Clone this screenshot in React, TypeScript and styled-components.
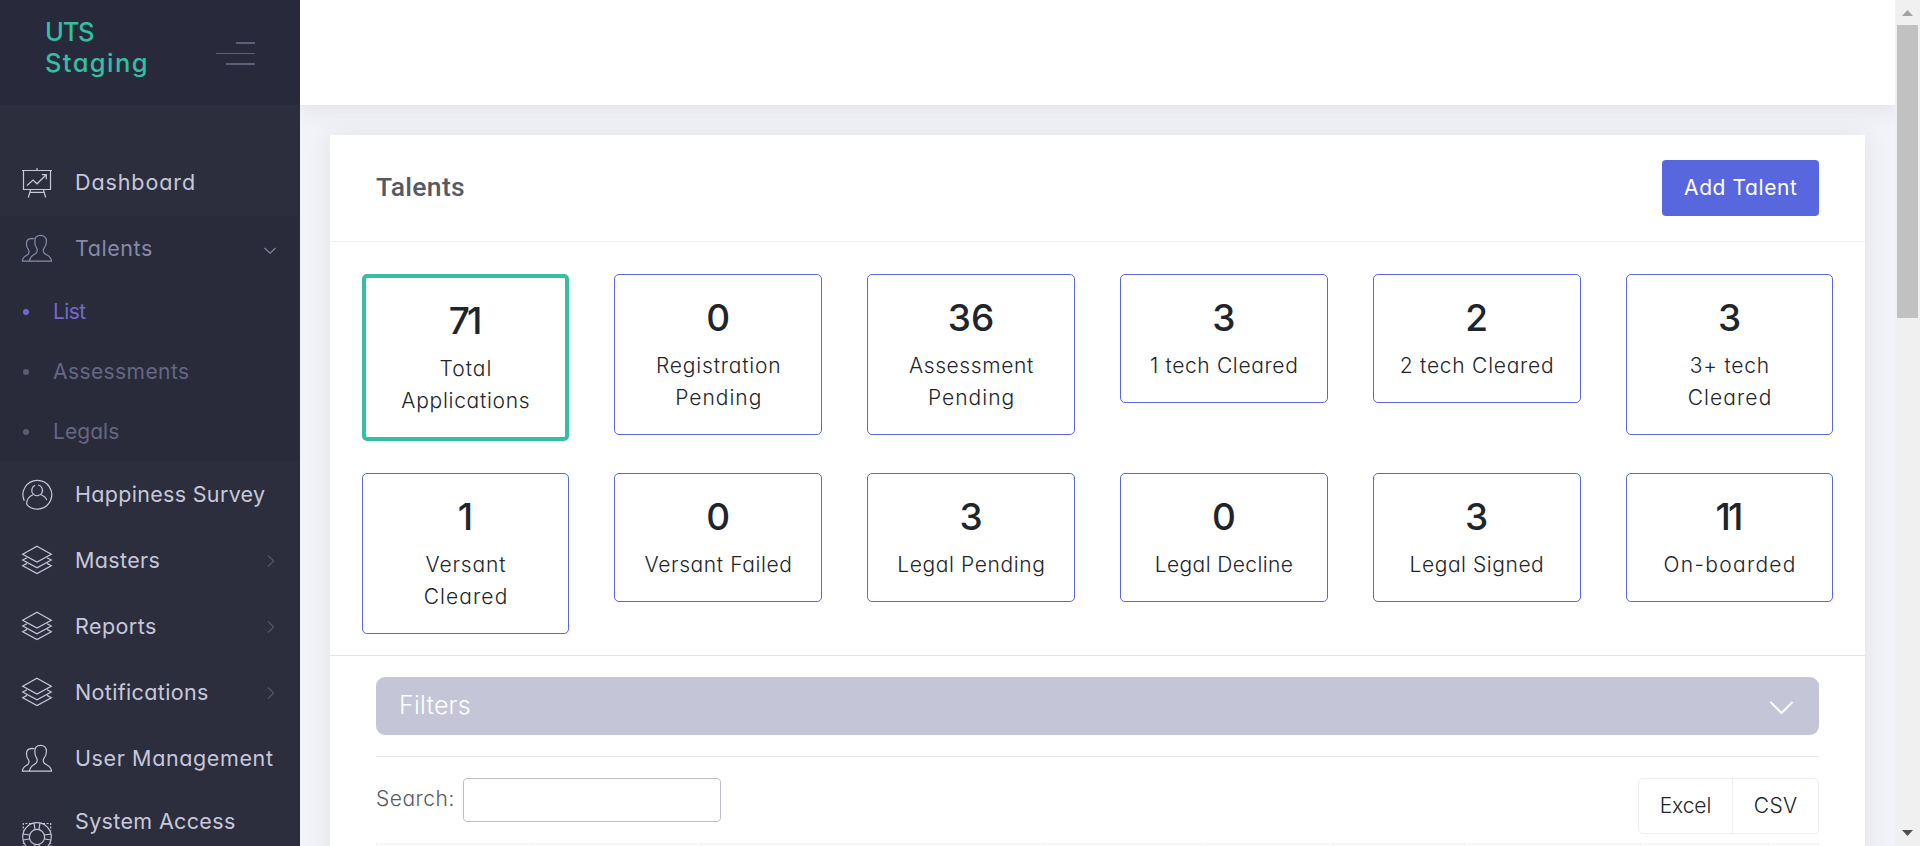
import React from "react";
import styled, { createGlobalStyle, css } from "styled-components";

const GlobalStyle = createGlobalStyle`
  *, *::before, *::after { box-sizing: border-box; }
  html, body { margin: 0; padding: 0; height: 846px; overflow: hidden; }
  body {
    font-family: Inter, "Open Sans", sans-serif;
    font-feature-settings: "cv11";
    background: #f2f3f8;
  }
`;

const Shell = styled.div`
  display: flex;
  width: 1920px;
  height: 846px;
  overflow: hidden;
`;

const Tracked = styled.span<{ $ls: number }>`
  display: inline-block;
  white-space: nowrap;
  letter-spacing: ${(p) => p.$ls}px;
  margin-right: ${(p) => -p.$ls}px;
`;

/* ---------- Sidebar ---------- */

const Sidebar = styled.aside`
  flex: none;
  width: 300px;
  height: 846px;
  overflow: hidden;
  background: #2c2e3e;
  z-index: 2;
`;

const Brand = styled.div`
  display: flex;
  justify-content: space-between;
  height: 105px;
  padding: 16px 45px 0 45px;
  background: #282a3c;
`;

const BrandName = styled.div`
  display: flex;
  flex-direction: column;
  align-items: flex-start;
  color: #34bfa3;
  font-size: 25.5px;
  font-weight: 500;
  line-height: 31px;
`;

const Toggler = styled.div`
  display: flex;
  flex-direction: column;
  align-items: flex-end;
  padding-top: 26px;
`;

const TogglerBar = styled.span<{ $w: number; $h: number; $gap: number }>`
  width: ${(p) => p.$w}px;
  height: ${(p) => p.$h}px;
  margin-bottom: ${(p) => p.$gap}px;
  background: #5d5f77;
`;

const Menu = styled.nav`
  padding-top: 45px;
`;

const MenuRow = styled.div<{ $open?: boolean; $tall?: boolean }>`
  display: flex;
  align-items: center;
  height: ${(p) => (p.$tall ? 91 : 66)}px;
  padding: 0 24px 0 22px;
  background: ${(p) => (p.$open ? "#292b3a" : "transparent")};
  color: ${(p) => (p.$open ? "#868aa8" : "#c6c8da")};
  font-size: 21.5px;
`;

const MenuIcon = styled.svg`
  flex: none;
  width: 30px;
  height: 30px;
  overflow: visible;
  fill: none;
  stroke: currentColor;
  stroke-width: 1.2;
`;

const MenuLabel = styled.span<{ $tall?: boolean }>`
  display: flex;
  flex-direction: column;
  align-items: flex-start;
  gap: 2px;
  flex: 1;
  padding: 0 0 ${(p) => (p.$tall ? 0 : 2)}px 23px;
  line-height: 32px;
`;

const MenuArrow = styled.svg<{ $dim?: boolean }>`
  flex: none;
  width: 12px;
  height: 12px;
  fill: none;
  stroke: ${(p) => (p.$dim ? "#55576f" : "#8688a5")};
  stroke-width: 1.1;
`;

const SubMenu = styled.div`
  background: #292b3a;
`;

const SubRow = styled.div<{ $active?: boolean }>`
  display: flex;
  align-items: center;
  gap: 24px;
  height: 60px;
  padding-left: 23px;
  color: ${(p) => (p.$active ? "#716aca" : "#656783")};
  font-size: 21px;

  & > span {
    padding-bottom: 2px;
  }

  &::before {
    content: "";
    width: 6px;
    height: 6px;
    border-radius: 50%;
    background: ${(p) => (p.$active ? "#716aca" : "#5a5c74")};
  }
`;

/* ---------- Main ---------- */

const Main = styled.div`
  flex: none;
  width: 1595px;
  height: 846px;
  overflow: hidden;
  background: #f2f3f8;
`;

const TopBar = styled.header`
  height: 105px;
  background: #fff;
  box-shadow: 0 1.5px 22.5px 1.5px rgba(69, 65, 78, 0.1);
`;

const Panel = styled.section`
  margin: 30px 30px 0 30px;
  height: 760px;
  background: #fff;
  box-shadow: 0 1.5px 22.5px 1.5px rgba(69, 65, 78, 0.08);
`;

const PanelHead = styled.div`
  display: flex;
  align-items: center;
  justify-content: space-between;
  height: 107px;
  padding: 0 46px;
  border-bottom: 1px solid #ebedf2;
`;

const PanelTitle = styled.h3`
  margin: 0;
  padding-bottom: 2px;
  color: #575962;
  font: 500 26.5px/32px Roboto, sans-serif;
`;

const PrimaryButton = styled.button`
  width: 157px;
  height: 56px;
  padding: 0 0 1px;
  border: 0;
  border-radius: 4px;
  background: #5867dd;
  color: #fff;
  font: 400 21px/30px Inter, sans-serif;
  font-feature-settings: "cv11";
`;

const Stats = styled.div`
  display: grid;
  grid-template-columns: repeat(6, 1fr);
  gap: 32px 45px;
  align-items: start;
  align-content: start;
  height: 414px;
  padding: 32px 31.6px 0;
  border-bottom: 1px solid #e3e4e8;
`;

const StatCard = styled.div<{ $selected?: boolean }>`
  display: flex;
  flex-direction: column;
  align-items: center;
  padding: 20px 0 20.6px;
  border-radius: 5px;
  color: #212529;
  ${(p) =>
    p.$selected
      ? css`
          border: 4px solid #34bfa3;
        `
      : css`
          border: 1px solid #5867dd;
        `}
`;

const StatValue = styled.div`
  margin-bottom: 10px;
  font-size: 37px;
  font-weight: 500;
  line-height: 45px;
`;

const StatLine = styled.div`
  font-size: 21px;
  font-weight: 300;
  line-height: 31.7px;
`;

const PanelBody = styled.div`
  padding: 21px 46px 0;
`;

const FilterBar = styled.div`
  display: flex;
  align-items: center;
  justify-content: space-between;
  height: 58px;
  padding: 0 25px 2px 23px;
  border-radius: 9px;
  background: #c4c5d6;
  color: #fff;
  font-size: 25px;
  font-weight: 300;
`;

const FilterArrow = styled.svg`
  width: 25px;
  height: 16px;
  margin-top: 5px;
  fill: none;
  stroke: #fff;
  stroke-width: 2;
`;

const Rule = styled.hr`
  height: 1px;
  margin: 21px 0;
  border: 0;
  background: #e3e4e7;
`;

const Tools = styled.div`
  display: flex;
  align-items: flex-start;
  justify-content: space-between;
  height: 65px;
`;

const SearchLabel = styled.label`
  display: flex;
  align-items: center;
  gap: 9px;
  height: 44px;
  color: #575962;
  font-size: 21px;
  font-weight: 300;

  & > span {
    padding-bottom: 3px;
  }
`;

const SearchInput = styled.input`
  width: 258px;
  height: 44px;
  border: 1px solid #bcbdc9;
  border-radius: 4px;
  background: #fff;
  outline: none;
`;

const ExportGroup = styled.div`
  display: flex;
  width: 181px;
  height: 56px;
  border: 1px solid #ebedf2;
  border-radius: 5px;
`;

const ExportButton = styled.button<{ $w: number }>`
  width: ${(p) => p.$w}px;
  padding: 0 0 1px;
  border: 0;
  background: transparent;
  color: #212529;
  font: 300 21px/30px Inter, sans-serif;

  & + & {
    border-left: 1px solid #ebedf2;
  }
`;

const TableHead = styled.div`
  display: grid;
  grid-template-columns: 156px 169px 343px 157px 132px 131px 176px 128px 1fr;
  height: 40px;
  border-top: 2px solid #f4f5f8;
  border-left: 1px solid #f4f5f8;
`;

const TableCell = styled.div`
  border-right: 1px solid #f4f5f8;
`;

/* ---------- Scrollbar ---------- */

const ScrollTrack = styled.div`
  display: flex;
  flex-direction: column;
  align-items: center;
  flex: none;
  width: 25px;
  height: 846px;
  background: #f0f0f0;
  z-index: 1;
`;

const ScrollThumb = styled.div`
  width: 21px;
  height: 293px;
  margin-bottom: auto;
  background: #c1c1c1;
`;

const ScrollArrow = styled.svg<{ $active?: boolean }>`
  width: 25px;
  height: 25px;
  fill: ${(p) => (p.$active ? "#505050" : "#a3a3a3")};
`;

/* ---------- Data ---------- */

type IconName = "board" | "users" | "profile" | "layers" | "lifebuoy";

const icons: Record<IconName, React.ReactNode> = {
  board: (
    <>
      <path d="M0 2.5H30M1.5 2.5V21.5H28.5V2.5M15 0V2.5M8.5 22L6.3 29.5M21.5 22L23.7 29.5M8 24.3H22" />
      <path d="M5 17.5L11 12L15 15.8L24 7M19.8 6.7H24.3V11.2" />
    </>
  ),
  users: (
    <>
      <path d="M18.5 1.3C14.5 1.3 12.8 3.6 12.8 7.2C12.8 10.8 13.3 12.3 14.5 13.8C15.2 15 15.3 17.4 14.3 18.8C12.8 20.8 7.8 21.3 7.5 27.2H29.5C29.5 21.5 23.5 21 22 18.8C21 17.3 21.3 15 22.2 13.8C23.6 12.3 24.4 10.5 24.4 7.2C24.4 3.4 22.3 1.3 18.5 1.3Z" />
      <path d="M12.6 4.7C11.8 4.3 11 4.3 10 4.3C6.2 4.5 4.4 6.7 4.5 9.7C4.5 12.5 5 14 6.3 15.5C7.2 17 7.1 19 6.2 20.2C4.8 22 .5 22.2 .5 27.2H7.5" />
    </>
  ),
  profile: (
    <g transform="translate(0 -0.8)">
      <path d="M2.3 21.6A14.4 14.4 0 1 1 4.6 25.1" />
      <path d="M13.2 6.1A5.4 5.4 0 1 0 16 5.8" />
      <path d="M11 15.5C7.5 16.8 4.7 20 4.5 25.3M19 15.5C22 16.8 24 18.3 24.8 21" />
    </g>
  ),
  layers: (
    <g transform="translate(0 -1)">
      <path d="M15 1.3L29.3 9.2L15 17L.7 9.2Z" />
      <path d="M5 12.7L.7 15L15 22.8L29.3 15L25 12.7" />
      <path d="M5 18.4L.7 20.7L15 28.5L29.3 20.7L25 18.4" />
    </g>
  ),
  lifebuoy: (
    <g transform="translate(0 -1)">
      <circle cx="15" cy="15" r="14.3" />
      <circle cx="15" cy="15" r="7.6" />
      <path d="M12 .9L13 7.5M18 .9L17 7.5M12 29.1L13 22.5M18 29.1L17 22.5M.9 12L7.5 13M.9 18L7.5 17M29.1 12L22.5 13M29.1 18L22.5 17" />
      <path strokeDasharray="2 1.6" d="M9 1.5H1.3V9M21 1.5H28.7V9M9 28.5H1.3V21M21 28.5H28.7V21" />
    </g>
  ),
};

interface Item {
  icon: IconName;
  lines: [string, number][];
  arrow?: boolean;
}

const lowerItems: Item[] = [
  { icon: "profile", lines: [["Happiness Survey", 0.31]] },
  { icon: "layers", lines: [["Masters", 0.35]], arrow: true },
  { icon: "layers", lines: [["Reports", 0.44]], arrow: true },
  { icon: "layers", lines: [["Notifications", 0.35]], arrow: true },
  { icon: "users", lines: [["User Management", 0.62]] },
  { icon: "lifebuoy", lines: [["System Access", 0.35], ["Roles", 0.3]] },
];

const subItems: [string, number][] = [
  ["List", -0.6],
  ["Assessments", 0.42],
  ["Legals", 0.05],
];

interface Stat {
  value: string;
  ls?: number;
  lines: [string, number][];
}

const stats: Stat[] = [
  { value: "71", ls: -2.8, lines: [["Total", 1.03], ["Applications", 0.71]] },
  { value: "0", lines: [["Registration", 0.8], ["Pending", 1]] },
  { value: "36", ls: 0, lines: [["Assessment", 0.61], ["Pending", 1]] },
  { value: "3", lines: [["1 tech Cleared", 0.65]] },
  { value: "2", lines: [["2 tech Cleared", 0.75]] },
  { value: "3", lines: [["3+ tech", 0.8], ["Cleared", 1.1]] },
  { value: "1", lines: [["Versant", 0.85], ["Cleared", 1.1]] },
  { value: "0", lines: [["Versant Failed", 0.6]] },
  { value: "3", lines: [["Legal Pending", 0.6]] },
  { value: "0", lines: [["Legal Decline", 0.4]] },
  { value: "3", lines: [["Legal Signed", 0.55]] },
  { value: "11", ls: -2.8, lines: [["On-boarded", 1.3]] },
];

const tableColumns = [0, 1, 2, 3, 4, 5, 6, 7, 8];

function NavItem({ icon, lines, arrow }: Item) {
  const tall = lines.length > 1;
  return (
    <MenuRow $tall={tall}>
      <MenuIcon viewBox="0 0 30 30">{icons[icon]}</MenuIcon>
      <MenuLabel $tall={tall}>
        {lines.map(([text, ls]) => (
          <Tracked key={text} $ls={ls}>
            {text}
          </Tracked>
        ))}
      </MenuLabel>
      {arrow && (
        <MenuArrow $dim viewBox="0 0 12 12">
          <path d="M4 0.5L9.7 6L4 11.5" />
        </MenuArrow>
      )}
    </MenuRow>
  );
}

export default function App() {
  return (
    <>
      <GlobalStyle />
      <Shell>
        <Sidebar>
          <Brand>
            <BrandName>
              <Tracked $ls={-1.2}>UTS</Tracked>
              <Tracked $ls={1.4}>Staging</Tracked>
            </BrandName>
            <Toggler>
              <TogglerBar $w={19} $h={2} $gap={9} />
              <TogglerBar $w={39} $h={1} $gap={9} />
              <TogglerBar $w={29} $h={2} $gap={0} />
            </Toggler>
          </Brand>
          <Menu>
            <NavItem icon="board" lines={[["Dashboard", 0.9]]} />
            <MenuRow $open>
              <MenuIcon viewBox="0 0 30 30">{icons.users}</MenuIcon>
              <MenuLabel>
                <Tracked $ls={0.56}>Talents</Tracked>
              </MenuLabel>
              <MenuArrow viewBox="0 0 12 12">
                <path d="M0.5 5L6 10.2L11.5 5" />
              </MenuArrow>
            </MenuRow>
            <SubMenu>
              {subItems.map(([text, ls], i) => (
                <SubRow key={text} $active={i === 0}>
                  <Tracked $ls={ls}>{text}</Tracked>
                </SubRow>
              ))}
            </SubMenu>
            {lowerItems.map((item) => (
              <NavItem key={item.lines[0][0]} {...item} />
            ))}
          </Menu>
        </Sidebar>

        <Main>
          <TopBar />
          <Panel>
            <PanelHead>
              <PanelTitle>
                <Tracked $ls={0.3}>Talents</Tracked>
              </PanelTitle>
              <PrimaryButton>
                <Tracked $ls={0.6}>Add Talent</Tracked>
              </PrimaryButton>
            </PanelHead>
            <Stats>
              {stats.map((s, i) => (
                <StatCard key={i} $selected={i === 0}>
                  <StatValue>
                    <Tracked $ls={s.ls ?? 0}>{s.value}</Tracked>
                  </StatValue>
                  {s.lines.map(([text, ls]) => (
                    <StatLine key={text}>
                      <Tracked $ls={ls}>{text}</Tracked>
                    </StatLine>
                  ))}
                </StatCard>
              ))}
            </Stats>
            <PanelBody>
              <FilterBar>
                <Tracked $ls={0.2}>Filters</Tracked>
                <FilterArrow viewBox="0 0 25 16">
                  <path d="M1.5 2L12.5 13L23.5 2" />
                </FilterArrow>
              </FilterBar>
              <Rule />
              <Tools>
                <SearchLabel>
                  <Tracked $ls={0.5}>Search:</Tracked>
                  <SearchInput type="text" />
                </SearchLabel>
                <ExportGroup>
                  <ExportButton $w={93}>
                    <Tracked $ls={-0.1}>Excel</Tracked>
                  </ExportButton>
                  <ExportButton $w={86}>
                    <Tracked $ls={0.3}>CSV</Tracked>
                  </ExportButton>
                </ExportGroup>
              </Tools>
              <TableHead>
                {tableColumns.map((c) => (
                  <TableCell key={c} />
                ))}
              </TableHead>
            </PanelBody>
          </Panel>
        </Main>

        <ScrollTrack>
          <ScrollArrow viewBox="0 0 25 25">
            <path d="M12.5 10L18 16H7Z" />
          </ScrollArrow>
          <ScrollThumb />
          <ScrollArrow $active viewBox="0 0 25 25">
            <path d="M7 9H18L12.5 15Z" />
          </ScrollArrow>
        </ScrollTrack>
      </Shell>
    </>
  );
}
